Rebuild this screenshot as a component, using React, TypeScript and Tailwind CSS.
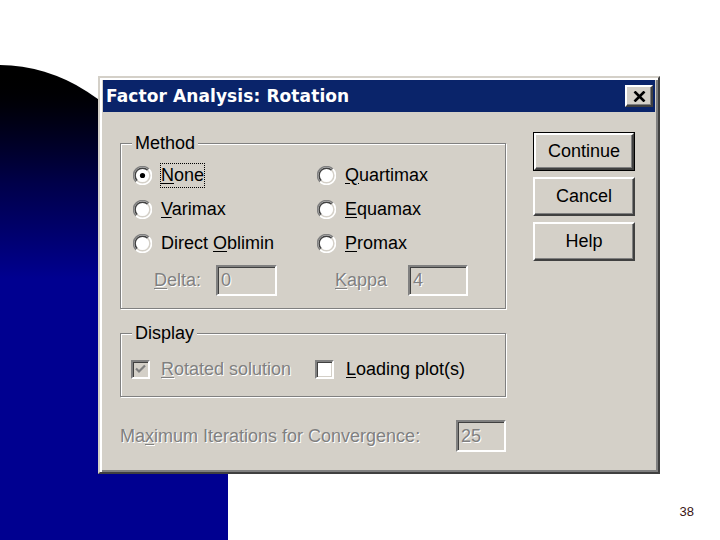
import React from "react";

const FONT = "font-['Liberation_Sans',Arial,sans-serif]";
const DIS = "text-[#808080] [text-shadow:1px_1px_0_#ffffff]";

function Radio({ checked }: { checked?: boolean }) {
  return (
    <svg width="19" height="19" viewBox="0 0 19 19" className="shrink-0">
      <circle cx="9.5" cy="9.5" r="9" fill="#fff" />
      <path d="M3.1 15.9 A9 9 0 0 1 15.9 3.1" fill="none" stroke="#808080" strokeWidth="1.5" />
      <path d="M4.3 14.7 A7.3 7.3 0 0 1 14.7 4.3" fill="none" stroke="#404040" strokeWidth="1.5" />
      <path d="M15.9 3.1 A9 9 0 0 1 3.1 15.9" fill="none" stroke="#ffffff" strokeWidth="1.5" />
      <path d="M14.7 4.3 A7.3 7.3 0 0 1 4.3 14.7" fill="none" stroke="#d4d0c8" strokeWidth="1.5" />
      {checked && <circle cx="9.5" cy="9.5" r="2.6" fill="#000" />}
    </svg>
  );
}

function Check({ checked, disabled }: { checked?: boolean; disabled?: boolean }) {
  return (
    <div
      className={`w-[19px] h-[19px] shrink-0 border-2 border-t-[#808080] border-l-[#808080] border-b-white border-r-white shadow-[inset_1px_1px_0_#404040,inset_-1px_-1px_0_#d4d0c8] flex items-center justify-center ${
        disabled ? "bg-[#d4d0c8]" : "bg-white"
      }`}
    >
      {checked && (
        <svg width="11" height="10" viewBox="0 0 11 10">
          <polyline points="1,4.5 4,7.5 10,1.5" fill="none" stroke={disabled ? "#808080" : "#000"} strokeWidth="2.2" />
        </svg>
      )}
    </div>
  );
}

function Field({ value, w }: { value: string; w: string }) {
  return (
    <div
      className={`${w} h-[31px] bg-[#d4d0c8] border-2 border-t-[#808080] border-l-[#808080] border-b-white border-r-white shadow-[inset_1px_1px_0_#404040,inset_-1px_-1px_0_#d4d0c8] flex items-center pl-[3px] ${DIS}`}
    >
      {value}
    </div>
  );
}

function Btn({ label, def }: { label: string; def?: boolean }) {
  return (
    <div className={`h-[39px] ${def ? "border border-black" : ""}`}>
      <div className="h-full border-2 border-t-white border-l-white border-b-[#404040] border-r-[#404040] shadow-[inset_-1px_-1px_0_#808080] flex items-center justify-center text-black">
        {label}
      </div>
    </div>
  );
}

function Group({ title, h, children }: { title: string; h: string; children: React.ReactNode }) {
  return (
    <div className={`relative ${h} border border-[#808080] shadow-[inset_1px_1px_0_#ffffff,1px_1px_0_#ffffff]`}>
      <span className="absolute left-[11px] -top-[11px] px-[3px] bg-[#d4d0c8] leading-[21px] text-black">{title}</span>
      {children}
    </div>
  );
}

function Opt({ k, rest, pre, checked, focus }: { k: string; rest: string; pre?: string; checked?: boolean; focus?: boolean }) {
  return (
    <div className="h-[34px] flex items-center">
      <Radio checked={checked} />
      <span className={`ml-[8px] leading-[23px] border ${focus ? "border-dotted border-black" : "border-transparent"}`}>
        {pre}
        <span className="underline underline-offset-[2px]">{k}</span>
        {rest}
      </span>
    </div>
  );
}

export default function App() {
  return (
    <div className={`relative w-[720px] h-[540px] bg-white overflow-hidden ${FONT}`}>
      <div className="absolute left-0 top-[65px] w-[228px] h-[475px] rounded-tr-[228px_350px] bg-linear-to-b from-black from-0% via-[#00004a] via-25% to-[#000090] to-45%" />

      <div className="relative pl-[98px] pt-[76px]">
        <div className="w-[562px] h-[398px] bg-[#d4d0c8] border-2 border-t-[#d4d0c8] border-l-[#d4d0c8] border-b-[#404040] border-r-[#404040] shadow-[inset_2px_2px_0_#ffffff,inset_-2px_-2px_0_#808080] pt-[2px] px-[3px] text-[18px] leading-[21px] text-black">
          {/* title bar */}
          <div className="h-[32px] bg-[#0a246a] flex items-center justify-between pl-[3px] pr-[2px]">
            <span className="text-white font-bold text-[17px] font-['DejaVu_Sans',Verdana,sans-serif] tracking-[0.1px]">
              Factor Analysis: Rotation
            </span>
            <div className="w-[28px] h-[22px] bg-[#d4d0c8] border-2 border-t-white border-l-white border-b-[#404040] border-r-[#404040] shadow-[inset_-1px_-1px_0_#808080] flex items-center justify-center">
              <svg width="13" height="11" viewBox="0 0 13 11">
                <path d="M1.5 0.5 L11.5 10.5 M11.5 0.5 L1.5 10.5" stroke="#000" strokeWidth="2.6" />
              </svg>
            </div>
          </div>

          {/* body */}
          <div className="flex pl-[17px]">
            <div className="w-[386px] pt-[31px]">
              <Group title="Method" h="h-[166px]">
                <div className="pt-[14px] pl-[12px] grid grid-cols-[184px_1fr]">
                  <Opt k="N" rest="one" checked focus />
                  <Opt k="Q" rest="uartimax" />
                  <Opt k="V" rest="arimax" />
                  <Opt k="E" rest="quamax" />
                  <Opt pre="Direct " k="O" rest="blimin" />
                  <Opt k="P" rest="romax" />
                  <div className="h-[40px] flex items-center">
                    <span className={`ml-[21px] w-[62px] ${DIS}`}>
                      <span className="underline underline-offset-[2px]">D</span>elta:
                    </span>
                    <Field value="0" w="w-[61px]" />
                  </div>
                  <div className="h-[40px] flex items-center">
                    <span className={`ml-[18px] w-[73px] ${DIS}`}>
                      <span className="underline underline-offset-[2px]">K</span>appa
                    </span>
                    <Field value="4" w="w-[60px]" />
                  </div>
                </div>
              </Group>

              <div className="mt-[24px]">
                <Group title="Display" h="h-[64px]">
                  <div className="pt-[20px] pl-[10px] grid grid-cols-[184px_1fr]">
                    <div className="h-[30px] flex items-center">
                      <Check checked disabled />
                      <span className={`ml-[11px] ${DIS}`}>
                        <span className="underline underline-offset-[2px]">R</span>otated solution
                      </span>
                    </div>
                    <div className="h-[30px] flex items-center">
                      <Check />
                      <span className="ml-[12px]">
                        <span className="underline underline-offset-[2px]">L</span>oading plot(s)
                      </span>
                    </div>
                  </div>
                </Group>
              </div>

              <div className="mt-[23px] h-[32px] flex items-center justify-between">
                <span className={DIS}>
                  Ma<span className="underline underline-offset-[2px]">x</span>imum Iterations for Convergence:
                </span>
                <Field value="25" w="w-[50px] h-[32px]" />
              </div>
            </div>

            <div className="ml-[27px] pt-[20px] w-[102px] flex flex-col gap-[6px]">
              <Btn label="Continue" def />
              <Btn label="Cancel" />
              <Btn label="Help" />
            </div>
          </div>
        </div>
      </div>

      <div className="flex justify-end pr-[26px] mt-[30px]">
        <span className="text-[13px] leading-[15px] text-[#3a1414] font-['Liberation_Sans',Arial,sans-serif]">38</span>
      </div>
    </div>
  );
}
